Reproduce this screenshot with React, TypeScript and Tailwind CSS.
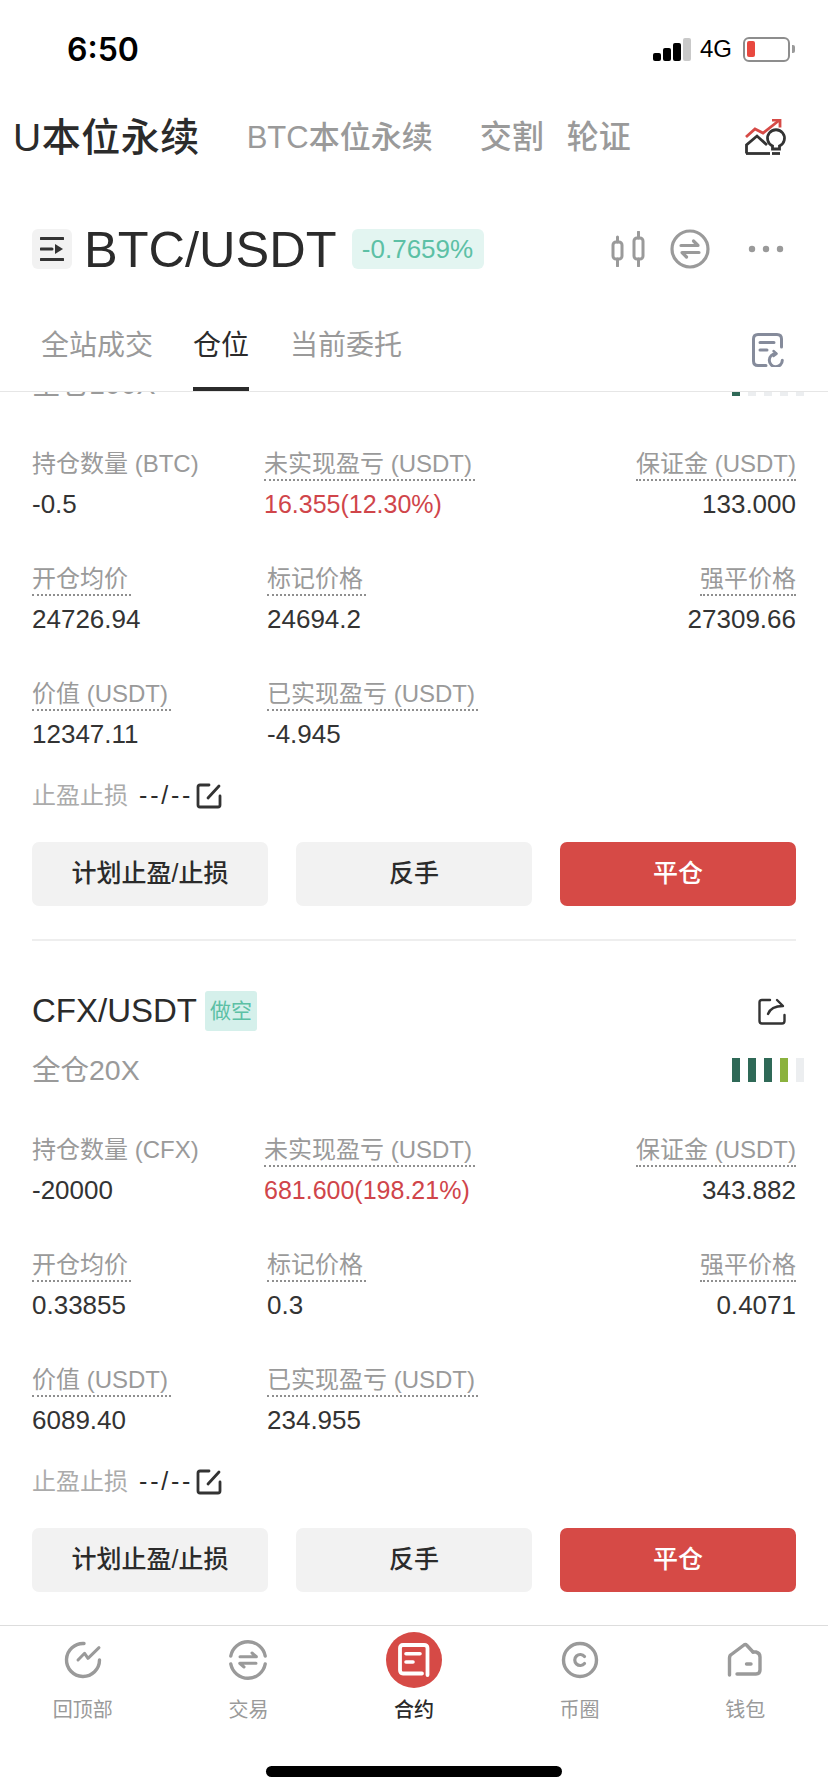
import React from "react";

const gray = "#9a9a9a";

function Market() {
  return (
    <svg width="42" height="37" viewBox="0 0 42 37" fill="none" strokeWidth="2.800">
      <path d="M1 18 L10 10 L18 14 L34 1.500" stroke="#d64a46" />
      <path d="M27 1 H35 V8.500" stroke="#d64a46" />
      <path d="M1.500 34.500 V26 L12 17 L22 26" stroke="#333" />
      <path d="M1 34.500 H25" stroke="#333" />
      <path d="M27.500 30 V27 A8.500 8.500 0 1 1 34.500 27 V30 Z" stroke="#333" />
      <path d="M27 34.500 H35" stroke="#333" />
    </svg>
  );
}
function Drawer() {
  return (
    <svg width="24" height="24" viewBox="0 0 24 24" fill="none">
      <path d="M1 1.500 H23 M1 22.500 H23 M1 12 H12" stroke="#333" strokeWidth="3" strokeLinecap="round" />
      <path d="M15 7 L23 12 L15 17 Z" fill="#333" />
    </svg>
  );
}
function Candle() {
  return (
    <svg width="34" height="36" viewBox="0 0 34 36" fill="none" stroke={gray} strokeWidth="3" strokeLinecap="round">
      <rect x="2" y="11" width="9" height="17" rx="3" />
      <path d="M6.500 6 V11 M6.500 28 V35" />
      <rect x="23" y="7" width="9" height="21" rx="3" />
      <path d="M27.500 1 V7 M27.500 28 V35" />
    </svg>
  );
}
function SwapCircle() {
  return (
    <svg width="40" height="40" viewBox="0 0 40 40" fill="none" stroke={gray} strokeWidth="3.200">
      <circle cx="20" cy="20" r="18" />
      <path d="M11 16.500 H28 L23.500 12" strokeLinecap="round" strokeLinejoin="round" />
      <path d="M29 23.500 H12 L16.500 28" strokeLinecap="round" strokeLinejoin="round" />
    </svg>
  );
}
function Dots() {
  return (
    <svg width="36" height="8" viewBox="0 0 36 8" fill={gray}>
      <circle cx="4" cy="4" r="3.200" />
      <circle cx="18" cy="4" r="3.200" />
      <circle cx="32" cy="4" r="3.200" />
    </svg>
  );
}
function Records() {
  return (
    <svg width="32" height="34" viewBox="0 0 32 34" fill="none" stroke="#858b9b" strokeWidth="3" strokeLinecap="round" strokeLinejoin="round">
      <path d="M29.500 14 V6 Q29.500 1.500 25 1.500 H6 Q1.500 1.500 1.500 6 V28 Q1.500 32.500 6 32.500 H14" />
      <path d="M8 9.500 H22 M8 17 H15" />
      <path d="M24 20.700 A6.500 6.500 0 1 0 30.300 27.200" />
      <path d="M21.500 18 L24.500 20.700 L21.500 23" strokeWidth="2.400" />
    </svg>
  );
}
function Edit() {
  return (
    <svg width="26" height="26" viewBox="0 0 26 26" fill="none" stroke="#333" strokeWidth="2.800" strokeLinecap="round">
      <path d="M13 2 H4 Q2 2 2 4 V22 Q2 24 4 24 H22 Q24 24 24 22 V13" />
      <path d="M23 3 L12 15" />
    </svg>
  );
}
function Share() {
  return (
    <svg width="28" height="27" viewBox="0 0 28 27" fill="none" stroke="#333" strokeWidth="2.400" strokeLinecap="round" strokeLinejoin="round">
      <path d="M12 2 H4 Q1.500 2 1.500 4.500 V23 Q1.500 25.500 4 25.500 H24 Q26.500 25.500 26.500 23 V17" />
      <path d="M10 16 Q13 8 25 8 L19 2" />
    </svg>
  );
}

function NavTop() {
  return (
    <svg width="38" height="38" viewBox="0 0 38 38" fill="none" stroke={gray} strokeWidth="3.400" strokeLinecap="round" strokeLinejoin="round">
      <path d="M20 2.500 A16.500 16.500 0 1 0 35.500 19" />
      <path d="M14 19 L20.600 12.300 L24 17.300 L35 6.700" strokeWidth="3" />
    </svg>
  );
}
function NavTrade() {
  return (
    <svg width="40" height="40" viewBox="0 0 40 40" fill="none" stroke={gray} strokeWidth="3.400" strokeLinecap="round" strokeLinejoin="round">
      <path d="M2.800 16 A17.500 17.500 0 0 1 37.200 16" />
      <path d="M2.800 24 A17.500 17.500 0 0 0 37.200 24" />
      <path d="M12 16.700 H28.400 L24 13" strokeWidth="3" />
      <path d="M28 23.300 H11.700 L16 27" strokeWidth="3" />
    </svg>
  );
}
function NavCoin() {
  return (
    <svg width="38" height="38" viewBox="0 0 38 38" fill="none" stroke={gray} strokeWidth="3.400" strokeLinecap="round">
      <circle cx="19" cy="19" r="16.500" />
      <path d="M23.500 15.500 A5.500 5.500 0 1 0 23.500 22.500" strokeWidth="3.200" />
    </svg>
  );
}
function NavWallet() {
  return (
    <svg width="36" height="36" viewBox="0 0 36 36" fill="none" stroke={gray} strokeWidth="3.400" strokeLinecap="round" strokeLinejoin="round">
      <path d="M2.500 33 V16 Q2.500 13 5 12 L17 3 Q18.500 2 20 3.500 L26 10" />
      <path d="M26 10 H29 Q33 11 33 15 V28 Q33 32 29 32 H10" />
      <path d="M19.500 22 H24" />
    </svg>
  );
}
function NavContract() {
  return (
    <div className="flex h-[56px] w-[56px] items-center justify-center rounded-full bg-[#d64a46]">
      <svg width="32" height="34" viewBox="0 0 32 34" fill="none" stroke="#fff" strokeWidth="3.400" strokeLinecap="round">
        <path d="M29.500 32 V5 Q29.500 2 26 2 H5 Q2 2 2 5 V27 Q2 30.500 5 30.500 H24" strokeWidth="3.800" />
        <path d="M8 10.700 H22 M8 19 H15" strokeWidth="3.600" />
      </svg>
    </div>
  );
}

function Label({ text, dotted, right }: { text: string; dotted?: boolean; right?: boolean }) {
  return (
    <div className={`w-fit text-[24px] leading-[30px] text-[#9a9a9a] ${dotted ? "border-b-2 border-dotted border-[#8f8f8f]" : "border-b-2 border-transparent"} ${dotted && !right ? "pr-[3px]" : ""}`}>
      {text}
    </div>
  );
}

function Cell({ label, value, dotted = true, red, right, inset }: { label: string; value: string; dotted?: boolean; red?: boolean; right?: boolean; inset?: boolean }) {
  return (
    <div className={`flex flex-col ${right ? "items-end" : "items-start"} ${inset ? "pl-[3px]" : ""}`}>
      <Label text={label} dotted={dotted} right={right} />
      <div className={`mt-[6px] leading-[34px] ${red ? "text-[25px] text-[#d0454a]" : "text-[26px] text-[#333333]"}`}>{value}</div>
    </div>
  );
}

type CardData = {
  pair: string;
  lev: string;
  bars: string[];
  unit: string;
  v: string[];
};

function Card({ d, border }: { d: CardData; border: boolean }) {
  return (
    <div className="px-8 pt-[50px]">
      <div className="flex h-[40px] items-center justify-between">
        <div className="flex items-center gap-[8px]">
          <span className="text-[33px] leading-[40px] text-[#2b2b2b]">{d.pair}</span>
          <span className="flex h-[40px] w-[52px] items-center justify-center rounded-[3px] bg-[#d5f0eb] text-[21px] text-[#5cc0a5]">做空</span>
        </div>
        <div className="mr-[10px]">
          <Share />
        </div>
      </div>
      <div className="-mr-2 mt-[19px] flex h-[40px] items-center justify-between">
        <span className="text-[28.500px] leading-[40px] text-[#9a9a9a]">{d.lev}</span>
        <div className="flex gap-[8px]">
          {d.bars.map((c, i) => (
            <div key={i} className="h-[24px] w-[8px]" style={{ backgroundColor: c }} />
          ))}
        </div>
      </div>
      <div className="mt-[45px] grid grid-cols-[232px_1fr_auto] gap-y-[43px]">
        <Cell label={`持仓数量 (${d.unit})`} value={d.v[0]} dotted={false} />
        <Cell label="未实现盈亏 (USDT)" value={d.v[1]} red />
        <Cell label="保证金 (USDT)" value={d.v[2]} right />
        <Cell label="开仓均价" value={d.v[3]} />
        <Cell label="标记价格" value={d.v[4]} inset />
        <Cell label="强平价格" value={d.v[5]} right />
        <Cell label="价值 (USDT)" value={d.v[6]} />
        <Cell label="已实现盈亏 (USDT)" value={d.v[7]} inset />
      </div>
      <div className="mt-[28px] flex h-[34px] items-center">
        <span className="text-[24px] text-[#ababab]">止盈止损</span>
        <span className="ml-[11px] text-[25px] tracking-[2.800px] text-[#2b2b2b]">--/--</span>
        <span className="ml-[3px]">
          <Edit />
        </span>
      </div>
      <div className="mt-[29px] flex gap-[28px]">
        <button className="h-[64px] flex-1 rounded-[7px] bg-[#f2f2f2] text-[25px] font-medium text-[#2b2b2b]">计划止盈/止损</button>
        <button className="h-[64px] flex-1 rounded-[7px] bg-[#f2f2f2] text-[25px] font-medium text-[#2b2b2b]">反手</button>
        <button className="h-[64px] flex-1 rounded-[7px] bg-[#d64a46] text-[25px] font-medium text-white">平仓</button>
      </div>
      <div className={`mt-[33px] h-[2px] ${border ? "bg-[#b9b9b9]" : "bg-[#eeeeee]"}`} />
    </div>
  );
}

const cards: CardData[] = [
  {
    pair: "BTC/USDT",
    lev: "全仓100X",
    bars: ["#2f6957", "#eceef0", "#eceef0", "#eceef0", "#eceef0"],
    unit: "BTC",
    v: ["-0.5", "16.355(12.30%)", "133.000", "24726.94", "24694.2", "27309.66", "12347.11", "-4.945"],
  },
  {
    pair: "CFX/USDT",
    lev: "全仓20X",
    bars: ["#2f6957", "#2f6957", "#2f6957", "#8bb23e", "#eceef0"],
    unit: "CFX",
    v: ["-20000", "681.600(198.21%)", "343.882", "0.33855", "0.3", "0.4071", "6089.40", "234.955"],
  },
];

const nav = [
  { icon: <NavTop />, label: "回顶部" },
  { icon: <NavTrade />, label: "交易" },
  { icon: <NavContract />, label: "合约", active: true },
  { icon: <NavCoin />, label: "币圈" },
  { icon: <NavWallet />, label: "钱包" },
];

export default function App() {
  return (
    <div className="flex h-[1792px] w-[828px] flex-col overflow-hidden bg-white font-['Liberation_Sans','Noto_Sans_CJK_SC',sans-serif] text-[#2b2b2b]">
      {/* status bar */}
      <div className="flex h-[98px] shrink-0 items-center justify-between pl-[67px] pr-[33px]">
        <span className="pt-[2px] font-['Inter',sans-serif] text-[32px] font-semibold text-black">6:50</span>
        <div className="flex items-center">
          <div className="flex items-end gap-[2px]">
            <div className="h-[8px] w-[8px] rounded-[2px] bg-black" />
            <div className="h-[13px] w-[8px] rounded-[2px] bg-black" />
            <div className="h-[18px] w-[8px] rounded-[2px] bg-black" />
            <div className="h-[23px] w-[8px] rounded-[2px] bg-[#c9c9c9]" />
          </div>
          <span className="ml-[9px] text-[24px] leading-none text-black">4G</span>
          <div className="ml-[11px] flex h-[25px] w-[47px] items-center rounded-[6px] border-2 border-[#8d8d8d] pl-[2px]">
            <div className="h-[16px] w-[8px] rounded-[2px] bg-[#e8483f]" />
          </div>
          <div className="ml-[2px] h-[8px] w-[3px] rounded-r-[2px] bg-[#9a9a9a]" />
        </div>
      </div>

      {/* product tabs */}
      <div className="relative flex h-[78px] shrink-0 items-center pl-[13px]">
        <span className="text-[39px] font-medium leading-none tracking-[0.5px] text-[#2b2b2b]">U本位永续</span>
        <span className="ml-[47px] text-[31px] font-medium leading-none text-[#9a9a9a]">BTC本位永续</span>
        <span className="ml-[47px] text-[32px] font-medium leading-none text-[#9a9a9a]">交割</span>
        <span className="ml-[23px] text-[32px] font-medium leading-none text-[#9a9a9a]">轮证</span>
        <div className="ml-auto mr-[41px]">
          <Market />
        </div>
      </div>

      {/* pair header */}
      <div className="flex h-[146px] shrink-0 items-center pl-8 pr-[44px]">
        <div className="flex h-[40px] w-[40px] items-center justify-center rounded-[6px] bg-[#f2f2f2]">
          <Drawer />
        </div>
        <span className="ml-[12px] pt-[2px] text-[50.500px] leading-none text-[#2b2b2b]">BTC/USDT</span>
        <span className="ml-[15px] flex h-[40px] w-[132px] items-center justify-center rounded-[6px] bg-[#e3f5f1] text-[26px] text-[#5cc0a5]">-0.7659%</span>
        <div className="ml-auto flex items-center">
          <Candle />
          <div className="ml-[25px]">
            <SwapCircle />
          </div>
          <div className="ml-[38px]">
            <Dots />
          </div>
        </div>
      </div>

      {/* sub tabs */}
      <div className="relative z-10 flex h-[70px] shrink-0 items-start border-b border-[#e6e6e6] bg-white pl-[41px]">
        <span className="pt-[2px] text-[28px] leading-[44px] text-[#9a9a9a]">全站成交</span>
        <div className="ml-[40px] flex h-full flex-col items-stretch justify-between">
          <span className="pt-[2px] text-[28px] leading-[44px] text-[#2b2b2b]">仓位</span>
          <div className="h-[4px] bg-[#2b2b2b]" />
        </div>
        <span className="ml-[41px] pt-[2px] text-[28px] leading-[44px] text-[#9a9a9a]">当前委托</span>
        <div className="ml-auto mr-[44px] mt-[11px]">
          <Records />
        </div>
      </div>

      {/* position list, scrolled */}
      <div className="relative min-h-0 flex-1 overflow-hidden">
        <div className="-mt-[137px]">
          <Card d={cards[0]} border={false} />
          <Card d={cards[1]} border />
        </div>
      </div>

      {/* bottom nav */}
      <div className="h-[167px] shrink-0 border-t border-[#dddddd] bg-white">
        <div className="grid grid-cols-5">
          {nav.map((n) => (
            <div key={n.label} className="flex flex-col items-center">
              <div className="flex h-[62px] items-center justify-center pt-[6px]">{n.icon}</div>
              <span className={`mt-[3px] text-[20px] leading-[38px] ${n.active ? "font-medium text-[#2b2b2b]" : "text-[#9a9a9a]"}`}>{n.label}</span>
            </div>
          ))}
        </div>
        <div className="mx-auto mt-[37px] h-[11px] w-[296px] rounded-full bg-black" />
      </div>
    </div>
  );
}
